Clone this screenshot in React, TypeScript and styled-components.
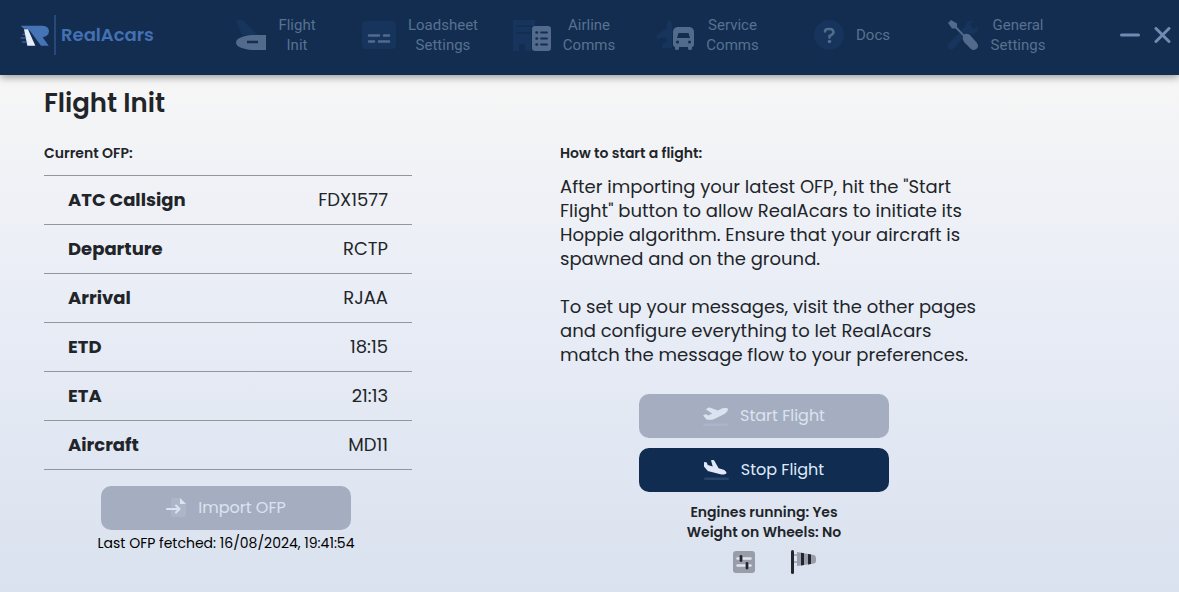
import React from "react";
import styled, { createGlobalStyle, css } from "styled-components";

const GlobalStyle = createGlobalStyle`
  *, *::before, *::after { box-sizing: border-box; }
  html { min-height: 100%; }
  body {
    margin: 0;
    min-height: 100vh;
    background: linear-gradient(180deg, #f6f6f6 0%, #f6f6f6 14%, #e9edf6 50%, #dae2ef 100%) no-repeat;
    color: #212529;
    font-family: Poppins, Inter, sans-serif;
  }
`;

const Header = styled.header`
  display: flex;
  align-items: center;
  min-height: 75px;
  padding: 0 8px 5px 20px;
  background: #122d50;
  box-shadow: 0 2px 8px rgba(0, 0, 0, 0.4);
`;

const Brand = styled.a`
  display: flex;
  align-items: center;
  width: 184px;
  gap: 5px;
  color: #4470b4;
  font-size: 18px;
  font-weight: 600;
  line-height: 24px;
  text-decoration: none;
`;

const BrandRule = styled.span`
  width: 2px;
  height: 40px;
  background: #26497c;
`;

const Nav = styled.nav`
  display: grid;
  grid-template-columns: repeat(6, 1fr);
  flex: 1;
`;

const NavLink = styled.a`
  display: flex;
  align-items: center;
  justify-content: center;
  gap: 12px;
  color: #587191;
  font-family: "Segoe UI", Roboto, sans-serif;
  font-size: 15px;
  line-height: 20px;
  text-align: center;
  text-decoration: none;
`;

const WindowControls = styled.div`
  display: flex;
  justify-content: flex-end;
  gap: 14px;
  width: 103px;
`;

const IconButton = styled.button`
  display: flex;
  align-items: center;
  justify-content: center;
  padding: 0;
  border: 0;
  background: none;
  color: #708bb1;
  cursor: pointer;
`;

const Main = styled.main`
  padding: 10px 44px 16px;
`;

const Title = styled.h1`
  margin: 0;
  font-size: 26px;
  font-weight: 600;
  line-height: 36px;
`;

const Columns = styled.div`
  display: grid;
  grid-template-columns: 516fr 575fr;
  margin-top: 22px;
`;

const Subtitle = styled.h2`
  margin: 0;
  font-size: 14px;
  font-weight: 600;
  line-height: 20px;
`;

const PlanTable = styled.table`
  width: 100%;
  max-width: 368px;
  margin-top: 12px;
  border-collapse: collapse;
  font-size: 18px;
  line-height: 24px;

  tr { border: solid #93969f; border-width: 1px 0; }
  th, td { height: 49px; padding: 0 24px; }
  th { font-weight: 700; text-align: left; }
  td { font-weight: 400; text-align: right; }
`;

const Stack = styled.div<{ $width: number; $top: number }>`
  display: flex;
  flex-direction: column;
  align-items: center;
  max-width: ${(p) => p.$width}px;
  margin-top: ${(p) => p.$top}px;
`;

const ActionButton = styled.button<{ $spaced?: boolean }>`
  display: flex;
  align-items: center;
  justify-content: center;
  gap: 12px;
  width: 250px;
  height: 44px;
  padding: 0;
  border: 0;
  border-radius: 10px;
  background: #102c50;
  color: #dfe9fa;
  font: 400 16px/24px Poppins, Inter, sans-serif;
  cursor: pointer;

  &:disabled {
    cursor: default;
    background: #a5aec0;
    color: #dbe3f1;
  }

  ${(p) => p.$spaced && css`margin-top: 10px;`}
`;

const Fetched = styled.p`
  margin: 3px 0 0;
  color: #000;
  font-size: 14px;
  font-weight: 400;
  line-height: 20px;
`;

const Guide = styled.p`
  max-width: 440px;
  margin: 12px 0 24px;
  font-size: 18px;
  font-weight: 400;
  line-height: 24px;

  & + & { margin: 0; }
`;

const Status = styled.p`
  margin: 10px 0 0;
  font-size: 14px;
  font-weight: 600;
  line-height: 20px;
  text-align: center;
`;

const Tools = styled.div`
  display: flex;
  align-items: center;
  gap: 36px;
  margin-top: 8px;
  padding-left: 20px;
`;

const DIM = "#16345c";
const LIT = "#526b8c";

const Logo = () => (
  <svg width="29" height="21" viewBox="0 0 87 63" aria-hidden="true">
    <path d="M2 2H68Q86 3 87 19Q86 34 68 37L86 62H63L32 20Q27 13 20 11H12Z" fill="#4672b6" />
    <path d="M12 13H24L46 62H22Z" fill="#e6eefb" />
    <path d="M8 28H15M2 39H19M6 51H22" stroke="#5c83bf" strokeWidth="2.5" />
  </svg>
);

const TailIcon = () => (
  <svg width="30" height="30" viewBox="0 0 30 30" aria-hidden="true">
    <path d="M0 0H7L22 15H6Z" fill={DIM} />
    <path d="M30 15V30H15Q0 28 0 22.500Q0 17 15 15Z" fill={LIT} />
    <path d="M11 22H22" stroke="#142f53" strokeWidth="2.500" />
  </svg>
);

const SheetIcon = () => (
  <svg width="34" height="28" viewBox="0 0 34 28" aria-hidden="true">
    <rect width="34" height="28" rx="4" fill={DIM} />
    <path d="M7 14.500H17M22 14.500H27M7 20.500H12M17 20.500H27" stroke={LIT} strokeWidth="2.500" strokeLinecap="round" />
  </svg>
);

const AirlineIcon = () => (
  <svg width="38" height="31" viewBox="0 0 38 31" aria-hidden="true">
    <path d="M0 0H22V6H18V31H12V24H6V31H0Z" fill={DIM} />
    <path d="M3 6H18M3 13H18" stroke="#132e52" strokeWidth="2" />
    <rect x="19" y="6" width="19" height="25" rx="3" fill={LIT} />
    <path d="M28 12.500H34M28 18.500H34M28 24.500H34" stroke="#142f53" strokeWidth="1.800" strokeLinecap="round" />
    <path d="M23.500 12.500H24M23.500 18.500H24M23.500 24.500H24" stroke="#142f53" strokeWidth="2.500" strokeLinecap="round" />
  </svg>
);

const ServiceIcon = () => (
  <svg width="37" height="30" viewBox="0 0 37 30" aria-hidden="true">
    <path d="M12 0Q15 1 15 5V28H5L6 24L10 22V17L0 19V15L10 8V3Q10 1 12 0Z" fill={DIM} />
    <path
      fill={LIT}
      fillRule="evenodd"
      d="M20 7H33Q37 8 37 12V25Q37 26.500 35 27V28.500Q35 30 33 30T31 28.500V27H22V28.500Q22 30 20 30T18 28.500V27Q16 26.500 16 25V12Q16 8 20 7ZM21.500 13L20 18H33L31.500 13ZM20.500 20.500A1.500 1.500 0 1 0 20.500 23.500A1.500 1.500 0 1 0 20.500 20.500ZM32.500 20.500A1.500 1.500 0 1 0 32.500 23.500A1.500 1.500 0 1 0 32.500 20.500Z"
    />
  </svg>
);

const DocsIcon = () => (
  <svg width="30" height="30" viewBox="0 0 30 30" aria-hidden="true">
    <circle cx="15" cy="15" r="15" fill={DIM} />
    <path d="M11 11.500Q11 9 14 9H16.500Q19.500 9.500 19.500 12.500Q19 14.500 15.500 16V17.500" fill="none" stroke={LIT} strokeWidth="2.600" strokeLinecap="round" />
    <circle cx="15.500" cy="21.500" r="1.800" fill={LIT} />
  </svg>
);

const ToolsIcon = () => (
  <svg width="32" height="32" viewBox="0 0 32 32" aria-hidden="true">
    <path d="M4 27L13 18M17 13L22 9" stroke={DIM} strokeWidth="7" strokeLinecap="round" />
    <path d="M26 2L22 7L25 10L31 8Q31 14 25 15Q17 15 18 7Q20 1 26 2Z" fill={DIM} />
    <path d="M1 4L4 1L10 4.500V8L17 15.500Q20 14 23 16L30 24Q32 27 30 29.500Q27 32 24 30L17 23Q15 20 16 17L8.500 9.500H5Z" fill={LIT} />
  </svg>
);

const ImportIcon = () => (
  <svg width="20" height="20" viewBox="0 0 20 20" aria-hidden="true">
    <path d="M7 0H14L20 6V17Q20 19 18 19H7Q5 19 5 17V2Q5 0 7 0Z" fill="#acb6c8" />
    <path d="M14 0L20 6H14Z" fill="currentColor" />
    <path d="M1 11H13M10 7.500L13.500 11L10 14.500" fill="none" stroke="currentColor" strokeWidth="2" strokeLinecap="round" strokeLinejoin="round" />
  </svg>
);

const PlaneIcon = ({ d, runway }: { d: string; runway: string }) => (
  <svg width="25" height="20" viewBox="0 0 640 512" aria-hidden="true">
    <path d={d} fill="currentColor" />
    <rect y="448" width="640" height="64" rx="32" fill={runway} />
  </svg>
);

const TAKE_OFF =
  "M381 114.900L186.100 41.800c-16.700-6.200-35.200-5.300-51.100 2.700L89.100 67.400C78 73 77.200 88.500 87.600 95.200l146.900 94.500L136 240 77.800 214.100c-8.700-3.900-18.800-3.700-27.300 .6L18.300 230.800c-9.300 4.700-11.800 16.800-5 24.700l73.100 85.300c6.100 7.100 15 11.200 24.300 11.200H248.400c5 0 9.900-1.200 14.300-3.400L535.600 212.200c46.500-23.300 82.500-63.300 100.800-112C645.900 75 627.200 48 600.200 48H542.800c-20.200 0-40.200 4.800-58.200 14L381 114.900z";
const LANDING =
  "M.3 166.900L0 68C0 57.700 9.500 50.100 19.500 52.300l35.600 7.900c10.600 2.300 19.200 9.900 23 20L96 128l127.300 37.600L181.800 20.400C178.900 10.200 186.600 0 197.200 0h40.100c11.600 0 22.200 6.200 27.900 16.300l109 193.800 107.200 31.700c15.900 4.700 30.800 12.500 43.700 22.800l34.400 27.600c24 19.200 18.100 57.300-10.700 68.200c-41.200 15.600-86.200 18.100-128.800 7L121.700 289.800c-11-2.900-20.900-8.900-28.500-17.200L9.300 181.200C3.500 177.400 .3 171.800 .3 166.900z";

const SlidersIcon = () => (
  <svg width="22" height="22" viewBox="0 0 22 22" aria-hidden="true">
    <rect width="22" height="22" rx="3" fill="#989da9" />
    <path d="M4.500 7.500H17.500M4.500 14.500H17.500" stroke="#dfe5f0" strokeWidth="2.500" strokeLinecap="round" />
    <path d="M8 5.500V9.500M14 12.500V17" stroke="#21252d" strokeWidth="2.800" strokeLinecap="round" />
  </svg>
);

const WindsockIcon = () => (
  <svg width="25" height="24" viewBox="0 0 25 24" aria-hidden="true">
    <path d="M3 5H7M3 12H7" stroke="#989da9" strokeWidth="1.500" />
    <path d="M6 2L23 5Q25 5.500 25 8V11Q25 13 23 13.500L6 16Z" fill="#989da9" />
    <path d="M10 2.700L13 3.200V15L10 15.400ZM17 4L20 4.500V14L17 14.400Z" fill="#21252d" />
    <path d="M1.500 1.500V22.500" stroke="#21252d" strokeWidth="3" strokeLinecap="round" />
  </svg>
);

const navItems = [
  { lines: ["Flight", "Init"], Icon: TailIcon },
  { lines: ["Loadsheet", "Settings"], Icon: SheetIcon },
  { lines: ["Airline", "Comms"], Icon: AirlineIcon },
  { lines: ["Service", "Comms"], Icon: ServiceIcon },
  { lines: ["Docs"], Icon: DocsIcon },
  { lines: ["General", "Settings"], Icon: ToolsIcon },
];

const plan = [
  ["ATC Callsign", "FDX1577"],
  ["Departure", "RCTP"],
  ["Arrival", "RJAA"],
  ["ETD", "18:15"],
  ["ETA", "21:13"],
  ["Aircraft", "MD11"],
];

export default function App() {
  return (
    <>
      <GlobalStyle />
      <Header>
        <Brand href="#">
          <Logo />
          <BrandRule />
          RealAcars
        </Brand>
        <Nav>
          {navItems.map(({ lines, Icon }) => (
            <NavLink href="#" key={lines.join(" ")}>
              <Icon />
              <span>
                {lines[0]}
                {lines[1] && (
                  <>
                    <br />
                    {lines[1]}
                  </>
                )}
              </span>
            </NavLink>
          ))}
        </Nav>
        <WindowControls>
          <IconButton aria-label="Minimize">
            <svg width="20" height="16" viewBox="0 0 20 16">
              <path d="M1.500 8H18.500" stroke="currentColor" strokeWidth="3" strokeLinecap="round" />
            </svg>
          </IconButton>
          <IconButton aria-label="Close">
            <svg width="17" height="16" viewBox="0 0 17 16">
              <path d="M2 1.500L15 14.500M15 1.500L2 14.500" stroke="currentColor" strokeWidth="3" strokeLinecap="round" />
            </svg>
          </IconButton>
        </WindowControls>
      </Header>
      <Main>
        <Title>Flight Init</Title>
        <Columns>
          <section>
            <Subtitle>Current OFP:</Subtitle>
            <PlanTable>
              <tbody>
                {plan.map(([label, value]) => (
                  <tr key={label}>
                    <th scope="row">{label}</th>
                    <td>{value}</td>
                  </tr>
                ))}
              </tbody>
            </PlanTable>
            <Stack $width={364} $top={16}>
              <ActionButton disabled>
                <ImportIcon />
                Import OFP
              </ActionButton>
              <Fetched>Last OFP fetched: 16/08/2024, 19:41:54</Fetched>
            </Stack>
          </section>
          <section>
            <Subtitle>How to start a flight:</Subtitle>
            <Guide>
              After importing your latest OFP, hit the "Start
              <br />
              Flight" button to allow RealAcars to initiate its
              <br />
              Hoppie algorithm. Ensure that your aircraft is
              <br />
              spawned and on the ground.
            </Guide>
            <Guide>
              To set up your messages, visit the other pages
              <br />
              and configure everything to let RealAcars
              <br />
              match the message flow to your preferences.
            </Guide>
            <Stack $width={408} $top={27}>
              <ActionButton disabled>
                <PlaneIcon d={TAKE_OFF} runway="#acb5c7" />
                Start Flight
              </ActionButton>
              <ActionButton $spaced>
                <PlaneIcon d={LANDING} runway="#27446f" />
                Stop Flight
              </ActionButton>
              <Status>
                Engines running: Yes
                <br />
                Weight on Wheels: No
              </Status>
              <Tools>
                <IconButton aria-label="Controls">
                  <SlidersIcon />
                </IconButton>
                <IconButton aria-label="Wind">
                  <WindsockIcon />
                </IconButton>
              </Tools>
            </Stack>
          </section>
        </Columns>
      </Main>
    </>
  );
}
